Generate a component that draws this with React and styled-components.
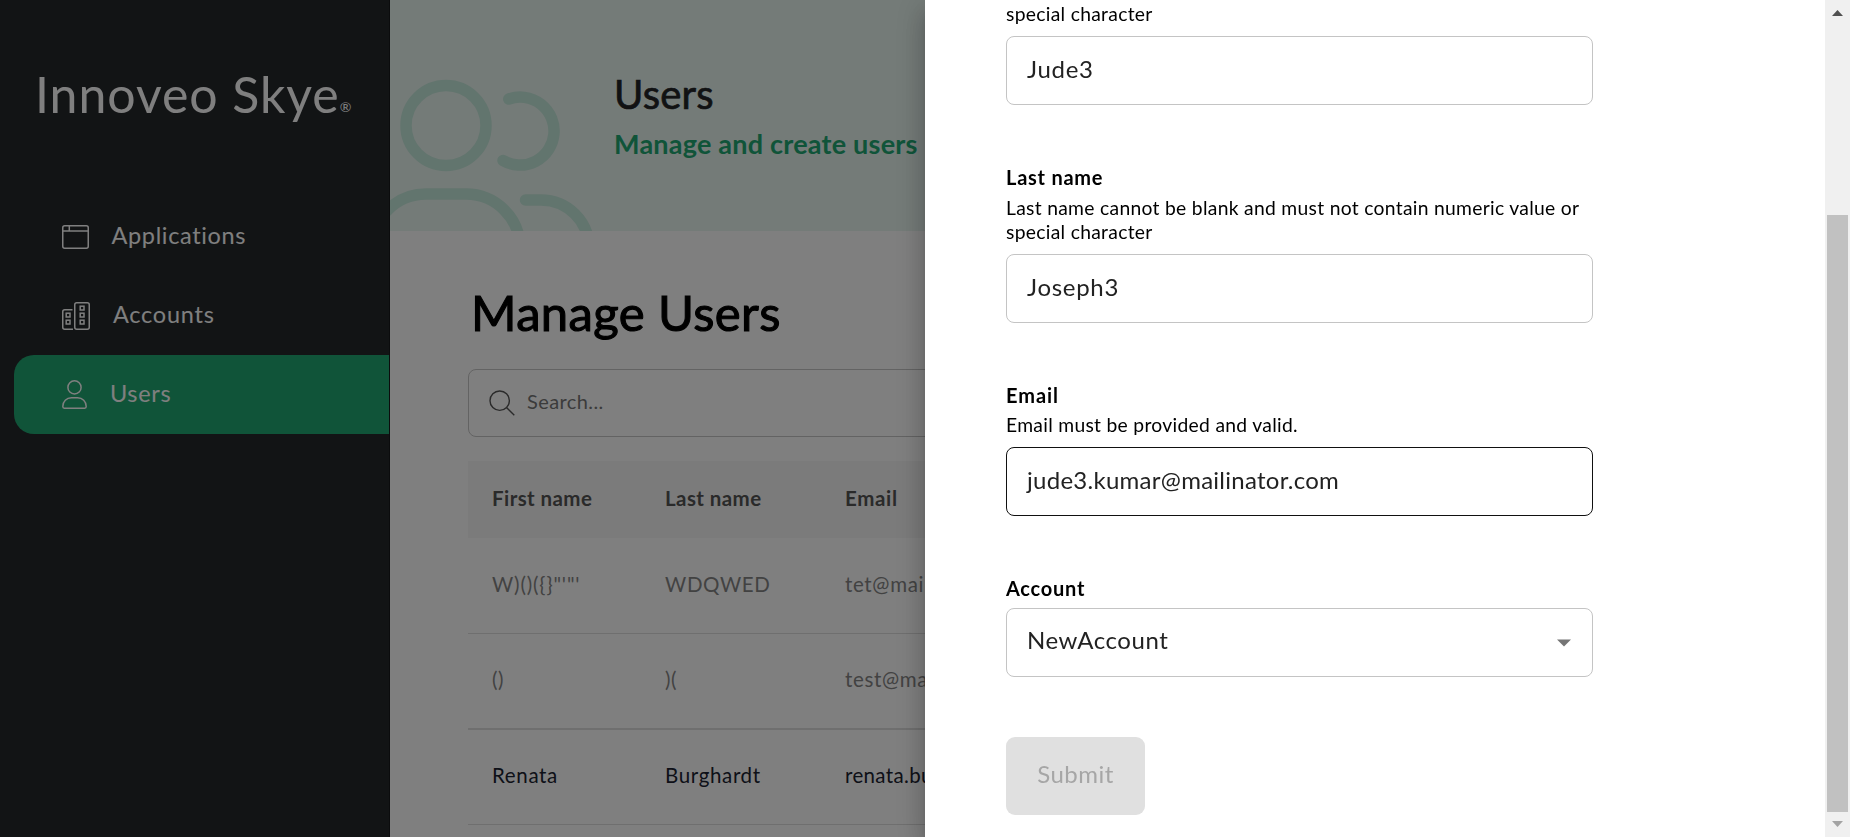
import React from "react";
import styled, { createGlobalStyle } from "styled-components";

const GlobalStyle = createGlobalStyle`
  *, *::before, *::after { box-sizing: border-box; }
  html, body { margin: 0; height: 100%; overflow: hidden; }
  body { font-family: Lato, "Liberation Sans", sans-serif; color: #000; background: #fff; }
  svg { display: block; }
`;

const Page = styled.div`
  display: flex;
  width: 1850px;
  height: 837px;
  overflow: hidden;
`;

const Sidebar = styled.aside`
  display: flex;
  flex-direction: column;
  width: 390px;
  flex: none;
  background: #25282b;
  border-right: 1px solid #16181a;
`;

const Logo = styled.div`
  display: flex;
  align-items: flex-end;
  height: 60px;
  margin: 64px 0 73px 35px;
  color: #fff;
`;

const LogoName = styled.span`
  font-size: 50px;
  line-height: 60px;
  letter-spacing: 0.95px;
  white-space: nowrap;
`;

const LogoMark = styled.span`
  font-size: 14px;
  line-height: 14px;
  margin: 0 0 10px 0;
`;

const Nav = styled.nav`
  display: flex;
  flex-direction: column;
  padding-left: 14px;
`;

const NavItem = styled.a`
  display: flex;
  align-items: center;
  height: 79px;
  padding-left: 48px;
  gap: ${(p) => p.$gap}px;
  border-radius: 20px 0 0 20px;
  background: ${(p) => (p.$active ? "#21a873" : "transparent")};
  color: #fff;
  font-size: 23.5px;
  line-height: 28px;
  letter-spacing: ${(p) => p.$spacing || 0.65}px;
`;

const NavText = styled.span`
  padding-bottom: 4px;
`;

const Content = styled.main`
  flex: 1;
  min-width: 0;
`;

const Banner = styled.header`
  display: flex;
  height: 231px;
  background: #e9f6f1;
`;

const BannerArt = styled.svg`
  flex: none;
  width: 223px;
  height: 231px;
`;

const BannerText = styled.div`
  padding: 70px 0 0 1px;
`;

const BannerTitle = styled.h1`
  margin: 0;
  font-size: 40px;
  font-weight: 400;
  line-height: 48px;
  letter-spacing: 0.2px;
  color: #222427;
  -webkit-text-stroke: 0.7px #222427;
`;

const BannerSubtitle = styled.p`
  margin: 10px 0 0;
  font-size: 27px;
  font-weight: 700;
  line-height: 32px;
  letter-spacing: 0.22px;
  white-space: nowrap;
  color: #21a873;
`;

const Section = styled.section`
  padding: 51px 0 0 78px;
`;

const SectionTitle = styled.h2`
  margin: 0 0 26px 3px;
  font-size: 49px;
  font-weight: 400;
  line-height: 61px;
  letter-spacing: 0.38px;
  -webkit-text-stroke: 1.1px #000;
`;

const SearchBox = styled.div`
  display: flex;
  align-items: center;
  gap: 12px;
  height: 68px;
  width: 1300px;
  padding: 0 0 1px 20px;
  border: 1px solid #c6c6c6;
  border-radius: 8px;
  color: #777;
  font-size: 20px;
  letter-spacing: 0.4px;
`;

const SearchText = styled.span`
  padding-bottom: 3px;
`;

const Table = styled.div`
  width: 1300px;
  margin-top: 24px;
`;

const Row = styled.div`
  display: grid;
  grid-template-columns: 173px 180px 1fr;
  align-items: center;
  height: ${(p) => p.$height}px;
  padding: 0 0 4px 24px;
  border-bottom: ${(p) => p.$line || 1}px solid #dedede;
  font-size: 20.5px;
  letter-spacing: 0.65px;
  color: ${(p) => (p.$muted ? "#858585" : "#1b2230")};
`;

const HeadRow = styled(Row)`
  padding-bottom: 3px;
  border-bottom: 0;
  background: #f7f7f7;
  color: #555;
  font-weight: 700;
  letter-spacing: 0.42px;
`;

const Code = styled.span`
  letter-spacing: 0.85px;
`;

const Mail = styled.span`
  letter-spacing: ${(p) => p.$spacing || 0.65}px;
`;

const Overlay = styled.div`
  position: fixed;
  inset: 0;
  background: rgba(0, 0, 0, 0.5);
`;

const Drawer = styled.div`
  position: fixed;
  top: 0;
  right: 0;
  display: flex;
  width: 925px;
  height: 837px;
  background: #fff;
  box-shadow: 0 8px 10px -5px rgba(0, 0, 0, 0.2), 0 16px 24px 2px rgba(0, 0, 0, 0.14),
    0 6px 30px 5px rgba(0, 0, 0, 0.12);
`;

const Form = styled.form`
  flex: 1;
  padding: 2px 0 0 81px;
`;

const Field = styled.div`
  width: 587px;
  margin-bottom: 60px;
`;

const Label = styled.label`
  display: block;
  font-size: 20px;
  font-weight: 700;
  line-height: 24px;
  letter-spacing: ${(p) => p.$spacing || 0.75}px;
  margin-bottom: ${(p) => p.$gap ?? 6}px;
`;

const Hint = styled.p`
  margin: 0 0 10px;
  font-size: 19.3px;
  line-height: 24px;
  letter-spacing: 0.3px;
`;

const Control = styled.div`
  display: flex;
  align-items: center;
  justify-content: space-between;
  height: 69px;
  padding: 0 21px 0 20px;
  border: 1px solid ${(p) => (p.$focused ? "#111" : "#c4c4c4")};
  border-radius: 8px;
  color: #222;
  font-size: 24px;
  line-height: 29px;
  letter-spacing: ${(p) => p.$spacing || 0.7}px;
`;

const Value = styled.span`
  padding-bottom: ${(p) => p.$lift || 4}px;
`;

const Submit = styled.button`
  display: block;
  width: 139px;
  height: 78px;
  padding: 0 0 5px;
  border: 0;
  border-radius: 9px;
  background: #e0e0e0;
  color: #a6a6a6;
  font: 400 24px/29px Lato, "Liberation Sans", sans-serif;
  letter-spacing: 0.45px;
`;

const ScrollTrack = styled.div`
  display: flex;
  flex-direction: column;
  align-items: center;
  width: 25px;
  background: #f0f0f0;
`;

const ScrollArrow = styled.svg`
  width: 11px;
  height: 6px;
  margin: ${(p) => p.$margin};
`;

const ScrollThumb = styled.div`
  width: 21px;
  height: 597px;
  background: #c1c1c1;
`;

const AppIcon = () => (
  <svg width="27" height="24" viewBox="0 0 27 24" fill="none" stroke="#fff" strokeWidth="1.5">
    <rect x="0.75" y="0.75" width="25.5" height="22.5" rx="2" />
    <path d="M1 6H26M7.3 1V6" />
  </svg>
);

const AccountsIcon = () => (
  <svg width="28" height="28" viewBox="0 0 28 28" fill="none" stroke="#fff" strokeWidth="1.5">
    <rect x="12.75" y="0.75" width="14.5" height="26.5" rx="2" />
    <path d="M10.5 7.7H2.75a2 2 0 0 0-2 2V25.25a2 2 0 0 0 2 2H11" />
    <rect x="18.2" y="4.2" width="3.8" height="3.8" />
    <rect x="18.2" y="11.2" width="3.8" height="3.8" />
    <rect x="18.2" y="18.2" width="3.8" height="3.8" />
    <rect x="4.2" y="11.2" width="3.8" height="3.8" />
    <rect x="4.2" y="18.2" width="3.8" height="3.8" />
  </svg>
);

const UserIcon = () => (
  <svg width="25" height="29" viewBox="0 0 25 29" fill="none" stroke="#fff" strokeWidth="1.5">
    <circle cx="12.5" cy="7.4" r="6.6" />
    <path d="M9.5 17.8h6c5 0 8.7 3.8 8.7 8.7 0 1.2-.5 1.7-1.5 1.7H2.3c-1 0-1.5-.5-1.5-1.7 0-4.9 3.700-8.700 8.700-8.700Z" />
  </svg>
);

const SearchIcon = () => (
  <svg width="26" height="26" viewBox="0 0 26 26" fill="none" stroke="#555" strokeWidth="1.4">
    <circle cx="10.7" cy="10.7" r="9.7" />
    <path d="M17.5 17.5L25.3 25.3" />
  </svg>
);

export default function App() {
  return (
    <>
      <GlobalStyle />
      <Page>
        <Sidebar>
          <Logo>
            <LogoName>Innoveo Skye</LogoName>
            <LogoMark>®</LogoMark>
          </Logo>
          <Nav>
            <NavItem $gap={22.5}>
              <AppIcon />
              <NavText>Applications</NavText>
            </NavItem>
            <NavItem $gap={23} $spacing={0.75}>
              <AccountsIcon />
              <NavText>Accounts</NavText>
            </NavItem>
            <NavItem $gap={23} $active>
              <UserIcon />
              <NavText>Users</NavText>
            </NavItem>
          </Nav>
        </Sidebar>
        <Content>
          <Banner>
            <BannerArt
              viewBox="390 0 223 231"
              fill="none"
              stroke="#c5eadc"
              strokeWidth="11.5"
              strokeLinecap="round"
            >
              <circle cx="446" cy="125.5" r="40" />
              <path d="M508.8 99A34 34 0 1 1 503 160.5" />
              <path d="M372 248a54 54 0 0 1 54-54h40a54 54 0 0 1 54 54" />
              <path d="M525.5 200H541a48 48 0 0 1 48 48" />
            </BannerArt>
            <BannerText>
              <BannerTitle>Users</BannerTitle>
              <BannerSubtitle>Manage and create users</BannerSubtitle>
            </BannerText>
          </Banner>
          <Section>
            <SectionTitle>Manage Users</SectionTitle>
            <SearchBox>
              <SearchIcon />
              <SearchText>Search...</SearchText>
            </SearchBox>
            <Table>
              <HeadRow $height={77}>
                <span>First name</span>
                <span>Last name</span>
                <Mail>Email</Mail>
              </HeadRow>
              <Row $height={96} $muted>
                <Code>{"W)()({}\"'\"'"}</Code>
                <span>WDQWED</span>
                <Mail>tet@mail</Mail>
              </Row>
              <Row $height={96} $line={2} $muted>
                <span>()</span>
                <span>)(</span>
                <Mail>test@ma</Mail>
              </Row>
              <Row $height={95}>
                <span>Renata</span>
                <span>Burghardt</span>
                <Mail $spacing={0.35}>renata.bu</Mail>
              </Row>
            </Table>
          </Section>
        </Content>
      </Page>
      <Overlay />
      <Drawer>
        <Form>
          <Field>
            <Hint>special character</Hint>
            <Control>
              <Value>Jude3</Value>
            </Control>
          </Field>
          <Field>
            <Label $gap={7}>Last name</Label>
            <Hint>
              Last name cannot be blank and must not contain numeric value or
              <br />
              special character
            </Hint>
            <Control>
              <Value>Joseph3</Value>
            </Control>
          </Field>
          <Field>
            <Label $spacing={0.95}>Email</Label>
            <Hint>Email must be provided and valid.</Hint>
            <Control $focused $spacing={0.27}>
              <Value>jude3.kumar@mailinator.com</Value>
            </Control>
          </Field>
          <Field>
            <Label $gap={8}>Account</Label>
            <Control $spacing={0.55}>
              <Value $lift={7}>NewAccount</Value>
              <svg width="14" height="8" viewBox="0 0 14 8">
                <path d="M0 0.5H14L7 7.5Z" fill="#757575" />
              </svg>
            </Control>
          </Field>
          <Submit type="button" disabled>
            Submit
          </Submit>
        </Form>
        <ScrollTrack>
          <ScrollArrow $margin="10px 0 199px" viewBox="0 0 11 6">
            <path d="M0 6L5.5 0L11 6Z" fill="#505050" />
          </ScrollArrow>
          <ScrollThumb />
          <ScrollArrow $margin="9px 0 0" viewBox="0 0 11 6">
            <path d="M0 0H11L5.5 6Z" fill="#a3a3a3" />
          </ScrollArrow>
        </ScrollTrack>
      </Drawer>
    </>
  );
}
